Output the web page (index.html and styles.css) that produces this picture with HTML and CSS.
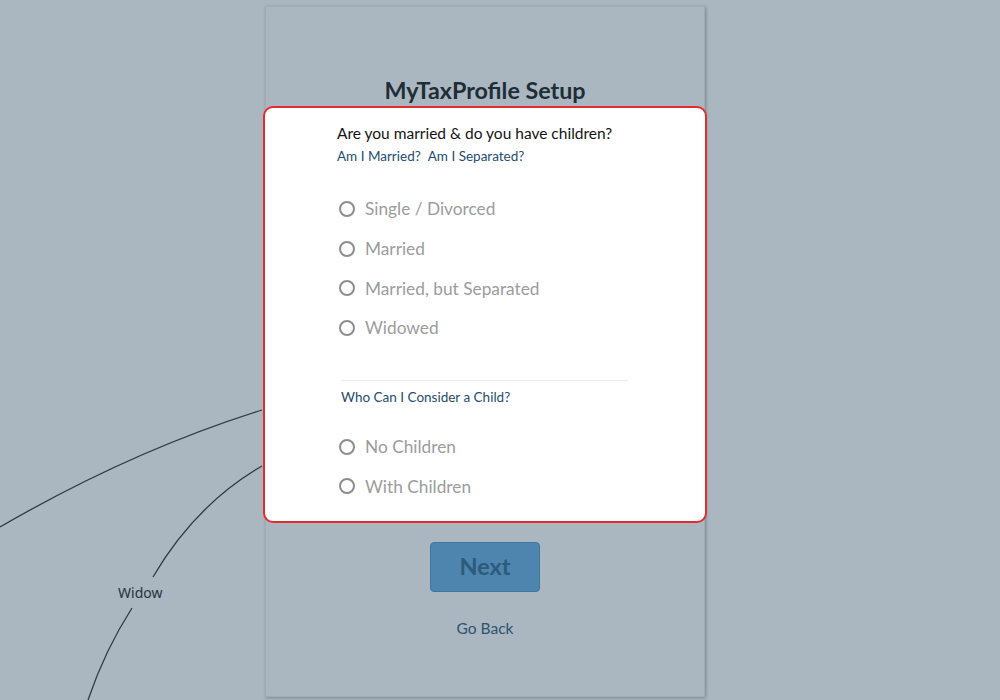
FILE: index.html
```html
<!DOCTYPE html>
<html>
<head>
<meta charset="utf-8">
<link rel="stylesheet" href="styles.css">
</head>
<body>
<svg class="diagram" width="1000" height="700" viewBox="0 0 1000 700">
  <path d="M0 527 Q131 451 262 410" />
  <path d="M262 466 Q195 505 153 577" />
  <path d="M132 608 Q105 650 88 700" />
</svg>
<div class="edge-label">Widow</div>
<main class="panel">
  <h1 class="title">MyTaxProfile Setup</h1>
  <section class="card">
    <p class="question">Are you married &amp; do you have children?</p>
    <div class="links"><a class="link">Am I Married?</a><a class="link">Am I Separated?</a></div>
    <ul class="options first">
      <li class="option"><span class="radio"></span>Single / Divorced</li>
      <li class="option"><span class="radio"></span>Married</li>
      <li class="option"><span class="radio"></span>Married, but Separated</li>
      <li class="option"><span class="radio"></span>Widowed</li>
    </ul>
    <hr class="divider">
    <div class="links child"><a class="link">Who Can I Consider a Child?</a></div>
    <ul class="options second">
      <li class="option"><span class="radio"></span>No Children</li>
      <li class="option"><span class="radio"></span>With Children</li>
    </ul>
  </section>
  <div class="actions">
    <button class="next">Next</button>
    <a class="back">Go Back</a>
  </div>
</main>
</body>
</html>
```

FILE: styles.css
```css
html, body {
  margin: 0;
  padding: 0;
}
body {
  background: #aab7c0;
  width: 1000px;
  height: 700px;
  overflow: hidden;
  position: relative;
  font-family: Lato, "Open Sans", sans-serif;
}
.diagram {
  position: absolute;
  left: 0;
  top: 0;
  fill: none;
  stroke: #2c3a44;
  stroke-width: 1.3;
}
.diagram path {
  fill: none;
}
.edge-label {
  position: absolute;
  left: 118px;
  top: 583px;
  font-family: "Noto Sans", "Open Sans", sans-serif;
  font-size: 14px;
  line-height: 20px;
  color: #26323b;
}
.panel {
  position: relative;
  margin: 6px 0 0 265px;
  width: 440px;
  height: 691px;
  box-sizing: border-box;
  border: 1px solid #a0acb4;
  box-shadow: 1px 1px 3px rgba(60, 75, 85, 0.45);
  display: flex;
  flex-direction: column;
  align-items: stretch;
}
.title {
  margin: 69px 0 0 0;
  text-align: center;
  font-size: 23.3px;
  line-height: 28px;
  font-weight: 700;
  color: #1f2d37;
}
.card {
  margin: 2px -3px 0 -3px;
  height: 417px;
  box-sizing: border-box;
  background: #fff;
  border: 2px solid #e52a30;
  border-radius: 10px;
  padding: 16px 0 0 72px;
  display: flex;
  flex-direction: column;
}
.question {
  margin: 0;
  font-size: 15.5px;
  line-height: 19px;
  color: #141414;
}
.links {
  display: flex;
  gap: 7px;
  margin-top: 5px;
}
.link {
  font-size: 13.5px;
  line-height: 17px;
  color: #1e4d70;
}
.links.child {
  margin-top: 8px;
  padding-left: 4px;
}
.options {
  list-style: none;
  margin: 0;
  padding: 0;
}
.options.first {
  margin-top: 24px;
}
.options.second {
  margin-top: 21px;
}
.option {
  height: 39.7px;
  display: flex;
  align-items: center;
  gap: 10px;
  font-size: 17.3px;
  color: #9c9c9c;
}
.radio {
  width: 16px;
  height: 16px;
  box-sizing: border-box;
  border: 2px solid #8d8d8d;
  border-radius: 50%;
  margin-left: 2px;
  flex: none;
}
.divider {
  margin: 32px 0 0 4px;
  width: 287px;
  border: 0;
  border-top: 1px solid #ececec;
  height: 0;
}
.actions {
  display: flex;
  flex-direction: column;
  align-items: center;
}
.next {
  margin-top: 19px;
  width: 110px;
  height: 50px;
  background: #4d85ae;
  border: 1px solid #3f76a0;
  border-radius: 4px;
  font-family: Lato, sans-serif;
  font-size: 23.5px;
  line-height: 28px;
  font-weight: 700;
  color: #2e5a7c;
  padding: 0 0 3px 0;
}
.back {
  margin-top: 27px;
  font-size: 15.5px;
  line-height: 18px;
  color: #2d5270;
}
```
